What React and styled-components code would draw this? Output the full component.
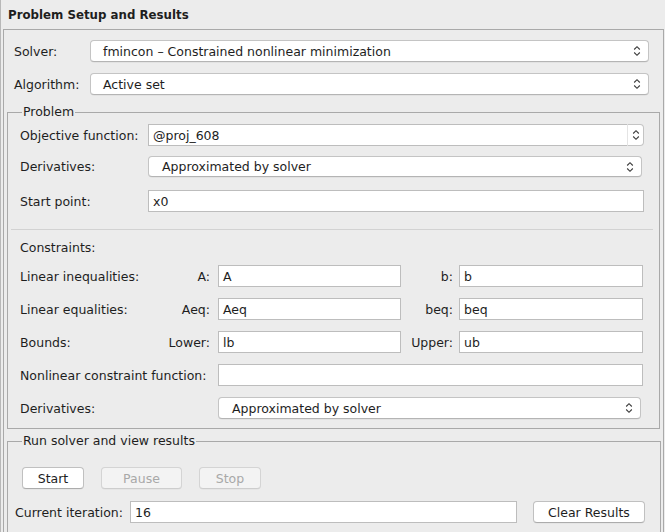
import React from "react";
import styled, { createGlobalStyle, css } from "styled-components";

const Global = createGlobalStyle`
  html, body { margin: 0; padding: 0; background: #ececec; overflow: hidden; }
  body { font-family: "DejaVu Sans", "Liberation Sans", sans-serif; font-size: 12.5px; color: #1e1e1e; }
  * { box-sizing: border-box; }
`;

const Frame = styled.div`
  width: 665px;
  height: 532px;
  border-left: 1px solid #b8b8b8;
  overflow: hidden;
`;

const Title = styled.div`
  font-weight: bold;
  font-size: 11.8px;
  padding: 8px 0 0 7px;
  height: 29px;
`;

const OuterBox = styled.div`
  margin-left: 2px;
  width: 661px;
  border: 1px solid #a9a9a9;
  padding: 10px 14px 0 10px;
  height: 520px;
`;

const TopRow = styled.div`
  display: grid;
  grid-template-columns: 76px 1fr;
  align-items: center;
  height: 22px;
  margin-bottom: 11px;
`;

const Label = styled.span`
  white-space: nowrap;
  text-align: ${(p) => (p.$right ? "right" : "left")};
  padding-right: ${(p) => p.$pr || 0}px;
  margin-bottom: ${(p) => p.$mb || 0}px;
  ${(p) =>
    p.$col &&
    css`
      grid-column: ${p.$col};
    `}
`;

const SelectBox = styled.div`
  display: flex;
  align-items: center;
  justify-content: space-between;
  height: ${(p) => p.$h || 22}px;
  background: #ffffff;
  border: 1px solid #c4c4c4;
  border-bottom-color: #b4b4b4;
  border-radius: 4px;
  padding: 0 7px 0 ${(p) => p.$pl || 12}px;
  margin-right: ${(p) => p.$mr || 0}px;
  margin-bottom: ${(p) => p.$mb || 0}px;
  box-shadow: 0 0.5px 0 rgba(0, 0, 0, 0.08);
  ${(p) =>
    p.$col &&
    css`
      grid-column: ${p.$col};
    `}
`;

const Chevron = () => (
  <svg width="8" height="12" viewBox="0 0 8 12">
    <path d="M1.2 4.5 L4 1.7 L6.8 4.5" fill="none" stroke="#3a3a3a" strokeWidth="1.1" />
    <path d="M1.2 7.5 L4 10.3 L6.8 7.5" fill="none" stroke="#3a3a3a" strokeWidth="1.1" />
  </svg>
);

const Group = styled.fieldset`
  margin: ${(p) => p.$top || 0}px 0 0 -7px;
  width: 653px;
  border: 1px solid #a9a9a9;
  padding: 0 15px ${(p) => p.$pb || 0}px 12px;
`;

const Legend = styled.legend`
  padding: 0 1px;
  margin-left: 2px;
  line-height: 16px;
`;

const FormGrid = styled.div`
  display: grid;
  grid-template-columns: 128px 1fr;
  grid-template-rows: 22px 24px 22px;
  row-gap: 10px;
  align-items: center;
  margin-top: ${(p) => p.$mt || 0}px;
`;

const TextInput = styled.div`
  height: 22px;
  background: #ffffff;
  border: 1px solid #bdbdbd;
  display: flex;
  align-items: center;
  padding-left: 4px;
  white-space: nowrap;
  ${(p) =>
    p.$col &&
    css`
      grid-column: ${p.$col};
    `}
`;

const Combo = styled.div`
  display: flex;
  height: 22px;
`;

const ComboField = styled.div`
  flex: 1;
  background: #ffffff;
  border: 1px solid #bdbdbd;
  border-right: none;
  display: flex;
  align-items: center;
  padding-left: 4px;
`;

const ComboArrow = styled.div`
  width: 17px;
  background: #ffffff;
  border: 1px solid #c4c4c4;
  border-left: 1px solid #e4e4e4;
  border-radius: 0 4px 4px 0;
  display: flex;
  align-items: center;
  justify-content: center;
`;

const Separator = styled.div`
  height: 1px;
  background: #d2d2d2;
  margin: 17px -9px 0 -9px;
`;

const Heading = styled.div`
  margin-top: 10px;
  height: 16px;
  line-height: 16px;
`;

const ConstraintGrid = styled.div`
  display: grid;
  grid-template-columns: 140px 58px 183px 58px 184px;
  grid-auto-rows: 22px;
  row-gap: 11px;
  align-items: center;
  margin-top: 9px;
`;

const GroupFoot = styled.div`
  height: 9px;
`;

const ButtonRow = styled.div`
  display: flex;
  gap: 17px;
  margin: 18px 0 0 2px;
`;

const Button = styled.button`
  font: inherit;
  height: 22px;
  width: ${(p) => p.$w}px;
  background: ${(p) => (p.disabled ? "#f3f3f3" : "#ffffff")};
  color: ${(p) => (p.disabled ? "#a8a8a8" : "#1e1e1e")};
  border: 1px solid ${(p) => (p.disabled ? "#d4d4d4" : "#c0c0c0")};
  border-bottom-color: ${(p) => (p.disabled ? "#cdcdcd" : "#acacac")};
  border-radius: 4px;
  padding: 0;
  box-shadow: 0 0.5px 0 rgba(0, 0, 0, 0.06);
`;

const IterRow = styled.div`
  display: flex;
  align-items: center;
  margin: 12px 0 0 -5px;
  height: 22px;
`;

const IterInput = styled(TextInput)`
  width: 387px;
  margin-left: 7px;
`;

const ClearButton = styled(Button)`
  margin-left: 16px;
`;

export default function App() {
  return (
    <>
      <Global />
      <Frame>
        <Title>Problem Setup and Results</Title>
        <OuterBox>
          <TopRow>
            <Label>Solver:</Label>
            <SelectBox>
              <span>fmincon – Constrained nonlinear minimization</span>
              <Chevron />
            </SelectBox>
          </TopRow>
          <TopRow>
            <Label>Algorithm:</Label>
            <SelectBox>
              <span>Active set</span>
              <Chevron />
            </SelectBox>
          </TopRow>

          <Group $top={-2}>
            <Legend>Problem</Legend>
            <FormGrid $mt={4}>
              <Label>Objective function:</Label>
              <Combo>
                <ComboField>@proj_608</ComboField>
                <ComboArrow>
                  <Chevron />
                </ComboArrow>
              </Combo>
              <Label $mb={3}>Derivatives:</Label>
              <SelectBox $pl={13} $mr={2} $h={21} $mb={3}>
                <span>Approximated by solver</span>
                <Chevron />
              </SelectBox>
              <Label>Start point:</Label>
              <TextInput>x0</TextInput>
            </FormGrid>
            <Separator />
            <Heading>Constraints:</Heading>
            <ConstraintGrid>
              <Label>Linear inequalities:</Label>
              <Label $right $pr={8}>A:</Label>
              <TextInput>A</TextInput>
              <Label $right $pr={6}>b:</Label>
              <TextInput>b</TextInput>

              <Label>Linear equalities:</Label>
              <Label $right $pr={8}>Aeq:</Label>
              <TextInput>Aeq</TextInput>
              <Label $right $pr={6}>beq:</Label>
              <TextInput>beq</TextInput>

              <Label>Bounds:</Label>
              <Label $right $pr={8}>Lower:</Label>
              <TextInput>lb</TextInput>
              <Label $right $pr={6}>Upper:</Label>
              <TextInput>ub</TextInput>

              <Label $col="1 / 3">Nonlinear constraint function:</Label>
              <TextInput $col="3 / 6" />

              <Label $col="1 / 3">Derivatives:</Label>
              <SelectBox $pl={13} $mr={2} $col="3 / 6">
                <span>Approximated by solver</span>
                <Chevron />
              </SelectBox>
            </ConstraintGrid>
            <GroupFoot />
          </Group>

          <Group $top={4} $pb={40}>
            <Legend>Run solver and view results</Legend>
            <ButtonRow>
              <Button $w={62}>Start</Button>
              <Button $w={81} disabled>Pause</Button>
              <Button $w={62} disabled>Stop</Button>
            </ButtonRow>
            <IterRow>
              <Label>Current iteration:</Label>
              <IterInput>16</IterInput>
              <ClearButton $w={112}>Clear Results</ClearButton>
            </IterRow>
          </Group>
        </OuterBox>
      </Frame>
    </>
  );
}
